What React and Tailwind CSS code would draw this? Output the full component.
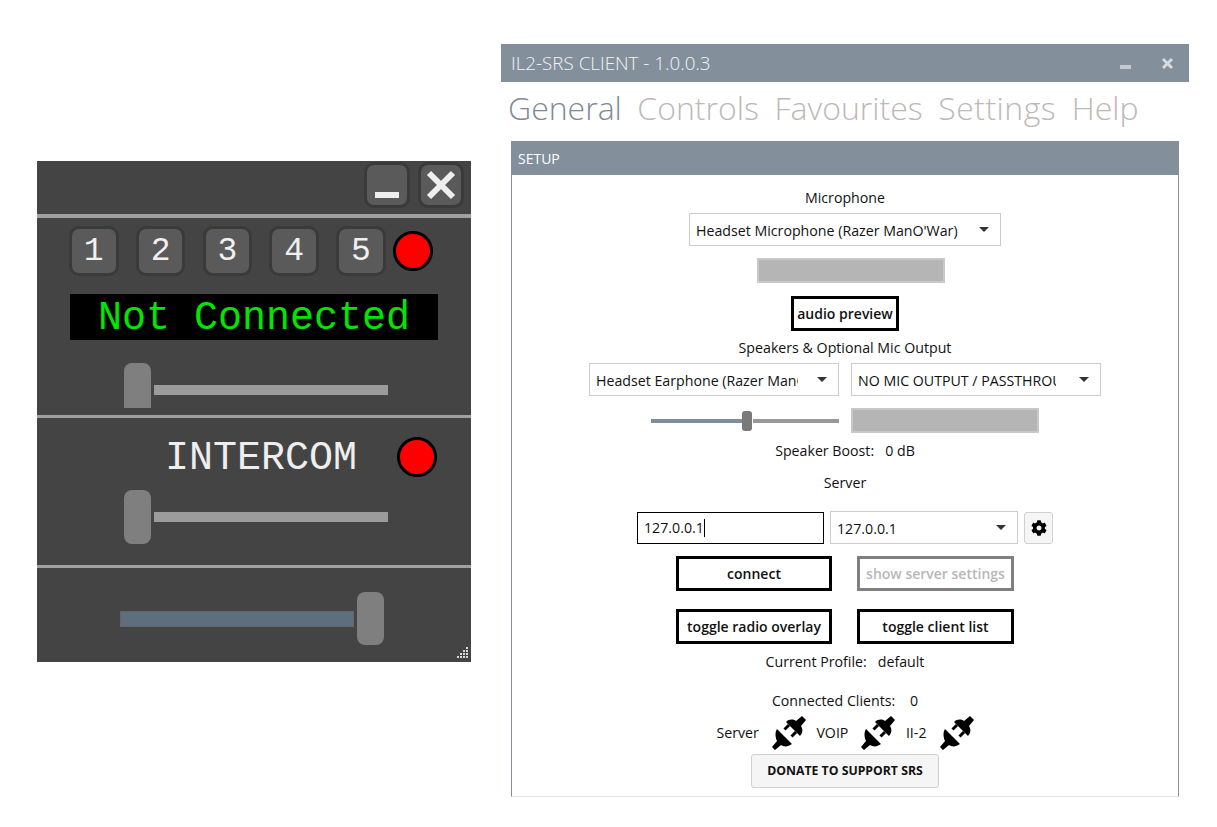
import { FaCog } from 'react-icons/fa';

const ui = "font-['Open_Sans','Noto_Sans',sans-serif]";
const mono = "font-['Liberation_Mono',monospace]";

function ChannelButton({ label }) {
  return (
    <div className={`w-[49.5px] h-[50px] rounded-[10px] border-[3px] border-[#3a3a3a] bg-[#5a5a5a] flex items-center justify-center text-[#f0f0f0] text-[33px] leading-none ${mono}`}>
      {label}
    </div>
  );
}

function Led() {
  return <div className="w-10 h-10 rounded-full border-[3px] border-black bg-[#ff0000]" />;
}

function Thumb({ className }) {
  return <div className={`w-[27px] bg-[#7f7f7f] ${className}`} />;
}

function Overlay() {
  return (
    <div className="w-[434px] h-[501px] shrink-0 bg-[#444444] flex flex-col relative">
      <div className="h-[53px] flex justify-end items-start gap-[8px] pt-[1px] pr-[7px]">
        <div className="w-[46px] h-[46px] rounded-[10px] border-[3px] border-[#3a3a3a] bg-[#5a5a5a] flex items-end justify-center pb-[7px]">
          <div className="w-6 h-[6px] bg-[#eeeeee]" />
        </div>
        <div className="w-[46px] h-[46px] rounded-[10px] border-[3px] border-[#3a3a3a] bg-[#5a5a5a] flex items-center justify-center">
          <svg width="30" height="30" viewBox="0 0 30 30">
            <path d="M3 3 L27 27 M27 3 L3 27" stroke="#eeeeee" strokeWidth="6" fill="none" />
          </svg>
        </div>
      </div>
      <div className="h-[4px] bg-[#a0a0a0]" />

      <div className="h-[197px] flex flex-col">
        <div className="flex items-center pl-[32px] pt-[8px] gap-[17.3px]">
          <ChannelButton label="1" />
          <ChannelButton label="2" />
          <ChannelButton label="3" />
          <ChannelButton label="4" />
          <div className="flex items-center gap-[7px]">
            <ChannelButton label="5" />
            <Led />
          </div>
        </div>
        <div className={`mt-[18px] ml-[33px] w-[368px] h-[46px] bg-black text-[#00e600] text-[40px] leading-[50px] text-center ${mono}`}>
          Not Connected
        </div>
        <div className="mt-[23px] ml-[87px] flex items-start gap-[3px]">
          <Thumb className="h-[45px] rounded-t-[8px]" />
          <div className="w-[234px] h-[10px] mt-[22px] bg-[#9b9b9b]" />
        </div>
      </div>

      <div className="h-[3px] bg-[#a0a0a0]" />

      <div className="h-[147px] flex flex-col">
        <div className="flex items-start pt-[19px] pl-[128px]">
          <div className={`text-[40px] h-[40px] leading-[44px] text-[#eeeeee] w-[232px] ${mono}`}>INTERCOM</div>
          <Led />
        </div>
        <div className="mt-[13px] ml-[87px] flex items-center gap-[3px]">
          <Thumb className="h-[54px] rounded-[8px]" />
          <div className="w-[234px] h-[10px] bg-[#9b9b9b]" />
        </div>
      </div>

      <div className="h-[3px] bg-[#a0a0a0]" />

      <div className="flex items-center gap-[3px] pt-[24px] pl-[83px]">
        <div className="w-[234px] h-[16px] bg-[#5e6e7c] border border-[#666666]" />
        <Thumb className="h-[53px] rounded-[8px]" />
      </div>

      <svg className="absolute right-[2px] bottom-[2px]" width="14" height="14" viewBox="0 0 14 14" fill="#d8d8d8">
        <rect x="11" y="1" width="2" height="2" />
        <rect x="8" y="4" width="2" height="2" />
        <rect x="11" y="4" width="2" height="2" />
        <rect x="5" y="7" width="2" height="2" />
        <rect x="8" y="7" width="2" height="2" />
        <rect x="11" y="7" width="2" height="2" />
        <rect x="2" y="10" width="2" height="2" />
        <rect x="5" y="10" width="2" height="2" />
        <rect x="8" y="10" width="2" height="2" />
        <rect x="11" y="10" width="2" height="2" />
      </svg>
    </div>
  );
}

function Chevron() {
  return <div className="w-0 h-0 border-x-[5px] border-x-transparent border-t-[5px] border-t-[#333333]" />;
}

function Select({ label, className, textWidth }) {
  return (
    <div className={`h-[33px] bg-white border border-[#cccccc] flex items-center justify-between pl-[6px] pr-[11px] text-[14.2px] text-[#111111] ${className}`}>
      <span className={`overflow-hidden whitespace-nowrap pt-[2px] ${textWidth}`}>{label}</span>
      <Chevron />
    </div>
  );
}

function OutlineButton({ children, className }) {
  return (
    <div className={`h-[35px] bg-white border-[3px] flex items-center justify-center font-semibold text-[14px] whitespace-nowrap ${className}`}>
      {children}
    </div>
  );
}

function PlugIcon() {
  return (
    <svg width="34" height="34" viewBox="0 0 34 34" fill="black">
      <path d="M5 13 L20 28 C16 31 12 31 9 29 L3 34 L0 31 L5 25 C3 21 3 16 5 13 Z" />
      <path d="M14 6 L28 20 C31 17 31 13 29 10 L34 4 L30 0 L24 5 C21 3 17 3 14 6 Z" />
      <path d="M17 9 L12.500 13.500 M24 16 L19.500 20.500" stroke="black" strokeWidth="3" fill="none" />
    </svg>
  );
}

function Client() {
  return (
    <div className={`w-[688px] shrink-0 ml-[30px] mt-[44px] ${ui}`}>
      <div className="h-[38px] bg-[#838f9b] flex items-center justify-between pl-[10px] pr-[15px]">
        <span className="text-[18.8px] font-light text-[#f4f4f4] pt-[1px]">IL2-SRS CLIENT - 1.0.0.3</span>
        <div className="flex items-center gap-[30px]">
          <div className="w-[11px] h-[4px] bg-[#c3c9cf] mt-[8px]" />
          <svg width="13" height="13" viewBox="0 0 13 13">
            <path d="M2 2 L11 11 M11 2 L2 11" stroke="#d7dbdf" strokeWidth="3" />
          </svg>
        </div>
      </div>

      <div className="h-[59px] flex items-center pl-[7px] pb-[8px] gap-[15.5px] text-[32px] font-light text-[#bdb9b6]">
        <span className="text-[#7f8a96]">General</span>
        <span>Controls</span>
        <span>Favourites</span>
        <span className="tracking-[0.5px]">Settings</span>
        <span>Help</span>
      </div>

      <div className="ml-[10px] w-[668px] h-[657px] flex flex-col">
        <div className="h-[34px] bg-[#838f9b] flex items-center pl-[7px] text-[14px] text-white">SETUP</div>
        <div className="h-[622px] border-x border-[#838f9b] border-b border-b-[#e4e4e4] bg-white flex flex-col items-center text-[14.2px] text-[#111111]">
          <div className="w-[654px] flex flex-col items-center">
            <div className="mt-[13px] h-[20px] leading-[20px]">Microphone</div>
            <Select label="Headset Microphone (Razer ManO'War)" className="mt-[5px] w-[312px]" textWidth="w-[270px]" />
            <div className="mt-[12px] ml-[12px] w-[188px] h-[25px] bg-[#b5b5b5] border-[2px] border-[#c8c8c8]" />
            <OutlineButton className="mt-[13px] w-[108px] border-black text-[#111111]">audio preview</OutlineButton>
            <div className="mt-[7px] h-[20px] leading-[20px]">Speakers &amp; Optional Mic Output</div>

            <div className="mt-[5px] flex gap-[12px]">
              <Select label="Headset Earphone (Razer ManO'War)" className="w-[250px]" textWidth="w-[202px]" />
              <Select label="NO MIC OUTPUT / PASSTHROUGH" className="w-[250px]" textWidth="w-[198px]" />
            </div>

            <div className="mt-[12px] flex items-center gap-[12px]">
              <div className="w-[188px] flex items-center">
                <div className="w-[91px] h-[4px] bg-[#7d8d9c]" />
                <div className="w-[10px] h-[20px] rounded-[3px] bg-[#7a7a7a]" />
                <div className="w-[86px] h-[4px] ml-[1px] bg-[#999999]" />
              </div>
              <div className="w-[188px] h-[25px] bg-[#b5b5b5] border-[2px] border-[#c8c8c8]" />
            </div>

            <div className="mt-[8px] h-[20px] leading-[20px]">Speaker Boost:&nbsp;&nbsp;&nbsp;0 dB</div>
            <div className="mt-[12px] h-[20px] leading-[20px]">Server</div>

            <div className="mt-[18px] flex gap-[6px] items-center">
              <div className="w-[187px] h-[32px] border border-black flex items-center pl-[6px]">
                127.0.0.1<span className="w-px h-[18px] bg-black" />
              </div>
              <Select label="127.0.0.1" className="w-[188px]" textWidth="w-[120px]" />
              <div className="w-[29px] h-[32px] rounded-[3px] border border-[#d0d0d0] bg-[#f5f5f5] flex items-center justify-center">
                <FaCog className="w-[16px] h-[16px] text-black" />
              </div>
            </div>

            <div className="mt-[12px] flex gap-[25px]">
              <OutlineButton className="w-[156px] border-black text-[#111111]">connect</OutlineButton>
              <OutlineButton className="w-[157px] border-[#808080] text-[#b8b8b8]">show server settings</OutlineButton>
            </div>
            <div className="mt-[18px] flex gap-[25px]">
              <OutlineButton className="w-[156px] border-black text-[#111111]">toggle radio overlay</OutlineButton>
              <OutlineButton className="w-[157px] border-black text-[#111111]">toggle client list</OutlineButton>
            </div>

            <div className="mt-[8px] h-[20px] leading-[20px]">Current Profile:&nbsp;&nbsp;&nbsp;default</div>
            <div className="mt-[19px] h-[20px] leading-[20px]">Connected Clients:&nbsp;&nbsp;&nbsp;&nbsp;0</div>

            <div className="mt-[5px] flex items-center h-[34px]">
              <span>Server</span>
              <span className="ml-[13px]"><PlugIcon /></span>
              <span className="ml-[10.5px]">VOIP</span>
              <span className="ml-[13px]"><PlugIcon /></span>
              <span className="ml-[10.5px]">II-2</span>
              <span className="ml-[13px]"><PlugIcon /></span>
            </div>

            <div className="mt-[4px] pt-[1px] w-[188px] h-[34px] rounded-[3px] border border-[#d0d0d0] bg-[#f5f5f5] flex items-center justify-center font-bold text-[12.25px] text-[#111111]">
              DONATE TO SUPPORT SRS
            </div>
          </div>
        </div>
      </div>
    </div>
  );
}

export default function App() {
  return (
    <div className="w-[1217px] h-[827px] overflow-hidden bg-white flex items-start">
      <div className="ml-[37px] mt-[161px]">
        <Overlay />
      </div>
      <Client />
    </div>
  );
}
